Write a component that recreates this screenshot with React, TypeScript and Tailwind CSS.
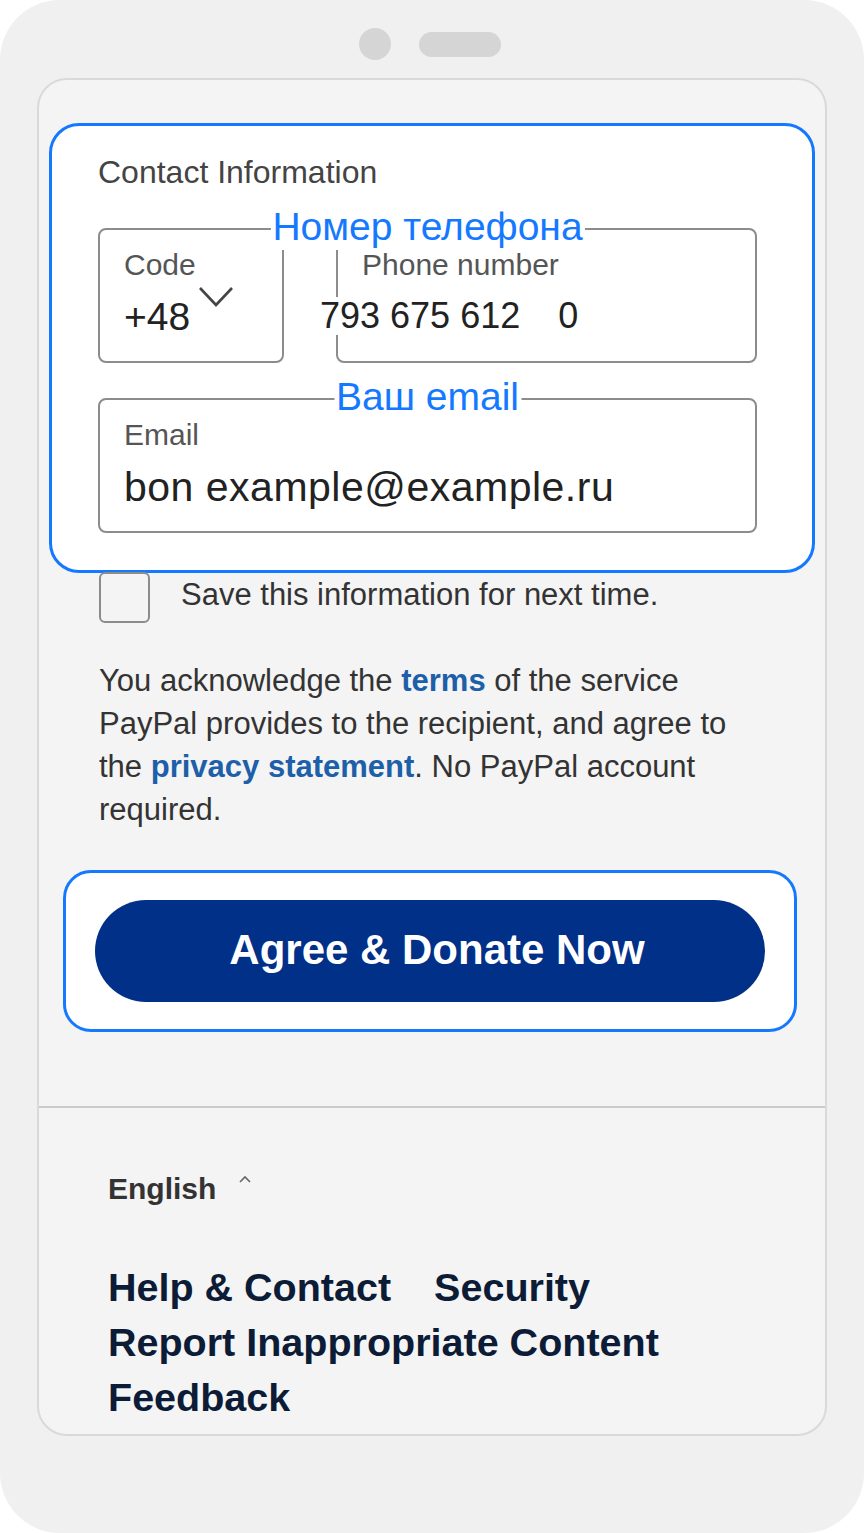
import { ReactNode } from "react";

const font = { fontFamily: '"Liberation Sans", Arial, sans-serif' };

const Legend = ({ children }: { children: ReactNode }) => (
    <span className="absolute left-1/2 top-[-24px] z-10 -translate-x-1/2 whitespace-nowrap bg-white px-[2px] text-[39px] leading-[46px] text-[#1479ff]">
        {children}
    </span>
);

const FieldBox = ({ label, className, children }: {
    label: string;
    className?: string;
    children: ReactNode;
}) => (
    <div className={`relative h-[135px] rounded-[8px] border-2 border-[#8c8c8c] px-[24px] pt-[17px] ${className ?? ""}`}>
        <div className="text-[30px] leading-[36px] text-[#555]">{label}</div>
        {children}
    </div>
);

export default function App() {
    return (
        <div className="min-h-screen bg-white" style={font}>
            <div className="flex h-[1533px] w-[864px] flex-col rounded-[60px] bg-[#f0f0f0] pt-[28px]">
                {/* camera + speaker */}
                <div className="flex h-[32px] items-center justify-center gap-[28px] pr-[4px]">
                    <div className="h-[32px] w-[32px] rounded-full bg-[#d5d5d5]" />
                    <div className="h-[25px] w-[82px] rounded-full bg-[#d5d5d5]" />
                </div>

                <div className="mx-[37px] mt-[18px] h-[1358px] overflow-hidden rounded-[30px] border-2 border-[#d9d9d9] bg-[#f4f4f4]">
                    {/* contact block */}
                    <div className="mx-[10px] mt-[43px] rounded-[30px] border-[3px] border-[#1479ff] bg-white pb-[37px] pl-[46px] pr-[55px] pt-[28px]">
                        <div className="text-[32px] leading-[36px] text-[#444]">Contact Information</div>

                        <div className="relative mt-[38px] flex gap-[52px]">
                            <Legend>Номер телефона</Legend>
                            <FieldBox label="Code" className="w-[186px]">
                                <div className="flex items-start">
                                    <span className="mt-[12px] text-[39px] leading-[44px] text-[#222]">+48</span>
                                    <svg className="ml-[8px] mt-[2px]" width="36" height="24" viewBox="0 0 36 24" fill="none">
                                        <path d="M2 3 L18 20 L34 3" stroke="#444" strokeWidth="2.6" />
                                    </svg>
                                </div>
                            </FieldBox>
                            <FieldBox label="Phone number" className="flex-1">
                                <div className="mt-[14px] flex items-center">
                                    <span className="relative ml-[-42px] bg-white text-[36px] leading-[38px] text-[#222]">793 675 612</span>
                                    <span className="ml-[38px] text-[36px] leading-[38px] text-[#222]">0</span>
                                </div>
                            </FieldBox>
                        </div>

                        <div className="relative mt-[35px]">
                            <Legend>Ваш email</Legend>
                            <FieldBox label="Email">
                                <div className="mt-[11px] text-[41px] leading-[46px] tracking-[0.5px] text-[#222]">bon example@example.ru</div>
                            </FieldBox>
                        </div>
                    </div>

                    {/* save info */}
                    <div className="flex items-start gap-[31px] pl-[60px]">
                        <div className="mt-[-1px] h-[51px] w-[51px] rounded-[6px] border-2 border-[#8c8c8c]" />
                        <div className="text-[31px] leading-[44px] text-[#333]">Save this information for next time.</div>
                    </div>

                    <p className="mt-[36px] pl-[60px] text-[31px] leading-[43px] text-[#333]">
                        You acknowledge the <span className="font-bold text-[#1d5fa8]">terms</span> of the service<br />
                        PayPal provides to the recipient, and agree to<br />
                        the <span className="font-bold text-[#1d5fa8]">privacy statement</span>. No PayPal account<br />
                        required.
                    </p>

                    {/* donate button */}
                    <div className="ml-[24px] mr-[28px] mt-[39px] rounded-[28px] border-[3px] border-[#1479ff] bg-white px-[29px] py-[27px]">
                        <button className="flex h-[102px] w-full items-center justify-center rounded-full bg-[#003087] pb-[4px] pl-[14px] text-[42px] font-bold text-white">
                            Agree &amp; Donate Now
                        </button>
                    </div>

                    {/* footer */}
                    <div className="mt-[74px] border-t-2 border-[#cbcbcb] pl-[69px]">
                        <div className="mt-[63px] flex items-start">
                            <span className="text-[30px] font-bold leading-[36px] text-[#333]">English</span>
                            <svg className="ml-[22px] mt-[4px]" width="14" height="9" viewBox="0 0 14 9" fill="none">
                                <path d="M2 7 L7 2 L12 7" stroke="#666" strokeWidth="1.6" />
                            </svg>
                        </div>
                        <div className="mt-[53px] text-[39.5px] font-bold leading-[55px] text-[#0c1b36]">
                            <div className="flex gap-[43px]">
                                <span>Help &amp; Contact</span>
                                <span>Security</span>
                            </div>
                            <div>Report Inappropriate Content</div>
                            <div>Feedback</div>
                        </div>
                    </div>
                </div>
            </div>
        </div>
    );
}
